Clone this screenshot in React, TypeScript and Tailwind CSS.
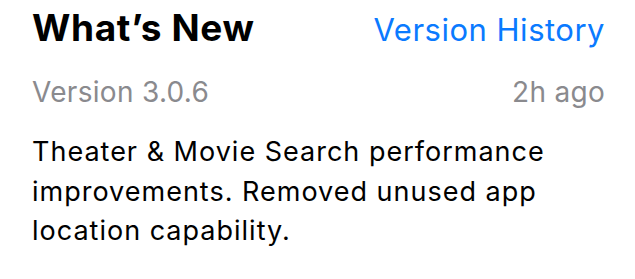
export default function App() {
  return (
    <div className="w-[635px] h-[279px] bg-white pl-[32px] pr-[30px] pt-[4px]" style={{ fontFamily: "Inter, 'Noto Sans', sans-serif" }}>
      <div className="flex items-baseline justify-between">
        <div className="text-[37px] font-bold text-black leading-[48px] tracking-[0.6px]">What’s New</div>
        <div className="text-[31px] text-[#0a7aff] leading-[48px] tracking-[0.5px]">Version History</div>
      </div>
      <div className="flex items-baseline justify-between mt-[18px]">
        <div className="text-[28px] text-[#8a8a8e] leading-[40px] tracking-[0.3px]">Version 3.0.6</div>
        <div className="text-[28px] text-[#8a8a8e] leading-[40px] tracking-[0.3px]">2h ago</div>
      </div>
      <div className="mt-[20px] text-[27px] text-black leading-[39.5px] tracking-[1px] w-[560px]">
        Theater &amp; Movie Search performance improvements. Removed unused app location capability.
      </div>
    </div>
  );
}
